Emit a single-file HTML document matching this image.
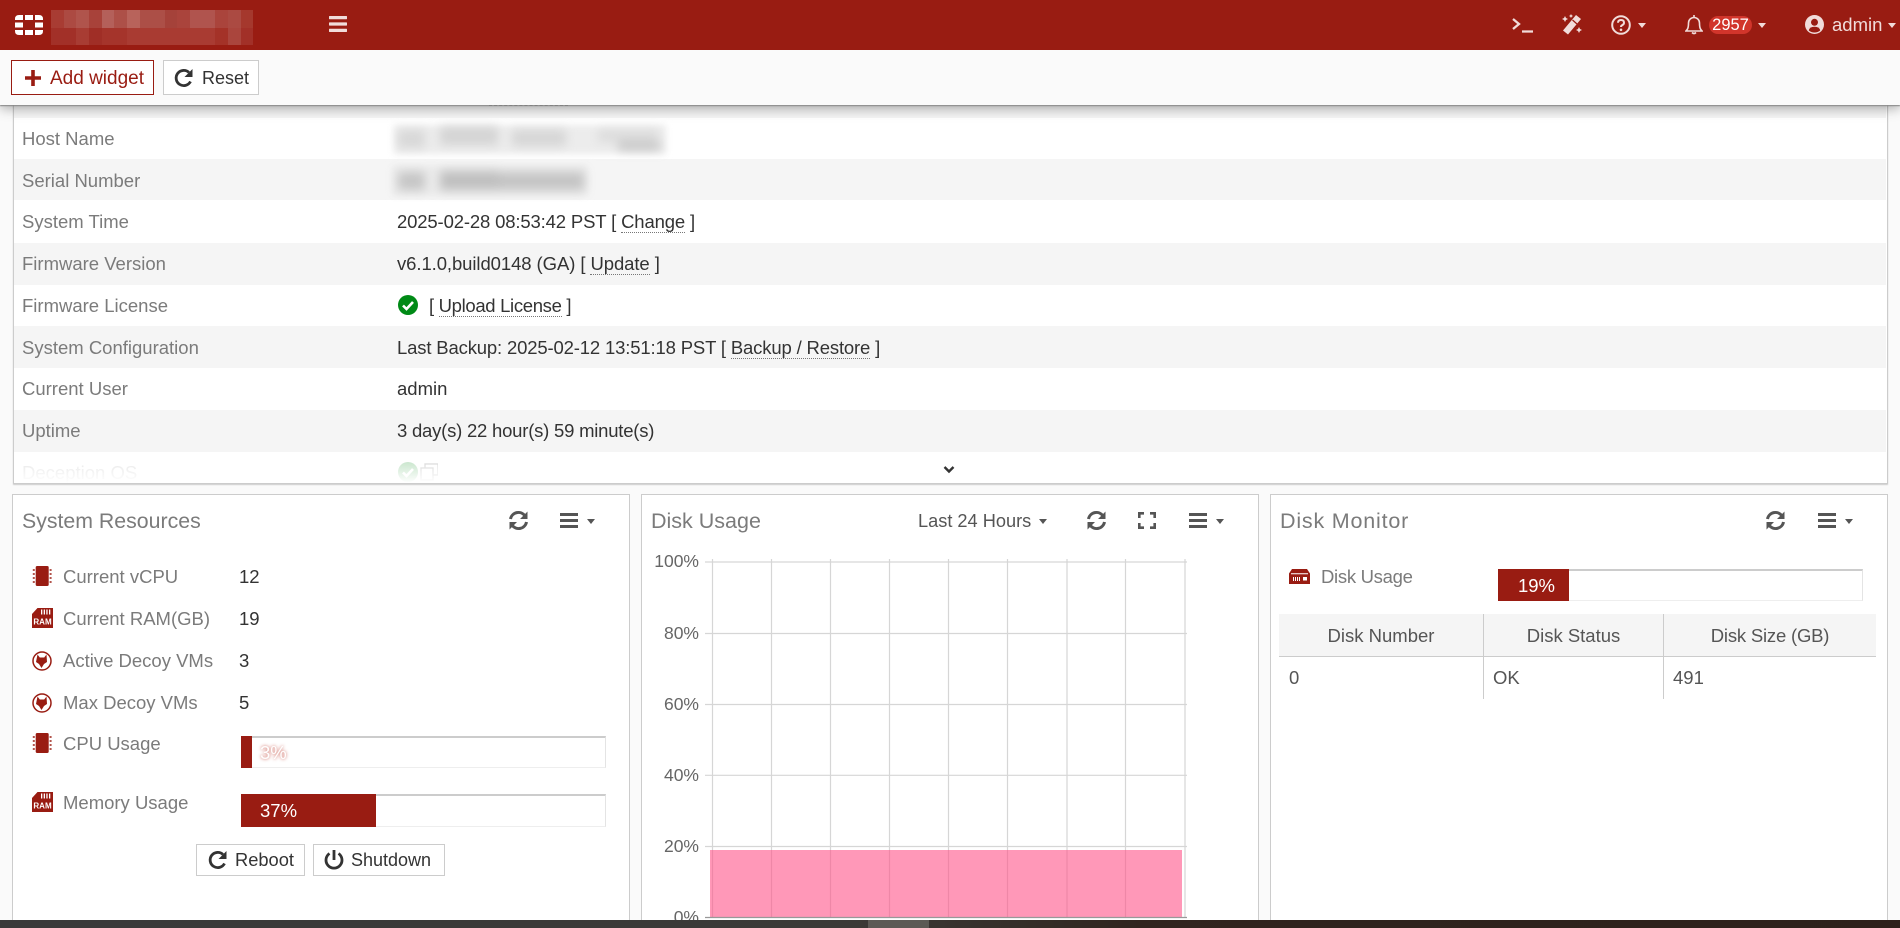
<!DOCTYPE html>
<html lang="en"><head><meta charset="utf-8"><title>Dashboard</title>
<style>
html,body{margin:0;padding:0;width:1900px;height:928px;overflow:hidden}
body{background:#fafafa;font-family:"Liberation Sans",sans-serif;color:#333}
#root{position:relative;width:1900px;height:928px;overflow:hidden;background:#fafafa}
.a,.t,svg{position:absolute}
.t{white-space:nowrap;line-height:24px;height:24px;font-size:18.5px}
.l{color:#7b7b7b}
.v{color:#333}
.h{font-size:21.3px;color:#7b7b7b}
.row{position:absolute;left:14px;width:1872px}
.g{background:#f5f5f5}
.d{border-bottom:1px dotted #777}
.box{position:absolute;background:#fff;border:1px solid #ccc;box-sizing:border-box}
.btn{position:absolute;box-sizing:border-box;background:#fff;border:1px solid #ccc}
.tr{position:absolute;width:0;height:0;border-left:4.5px solid transparent;border-right:4.5px solid transparent;border-top:5px solid #555}
.w{border-top-color:#f1dcda}
.prog{position:absolute;background:#fff;box-sizing:border-box;border-top:2px solid #ccc;border-right:1px solid #e4e4e4;border-bottom:1px solid #eee}
.fill{position:absolute;background:#991c12}
</style></head><body><div id="root">

<!-- panel -->
<div class="box" style="left:13px;top:95px;width:1875px;height:389px;box-shadow:0 1px 1px #ccc"></div>
<div class="row g" style="top:105px;height:13px"></div>
<div class="a" style="left:489px;top:105px;width:79px;border-top:1px dashed #888"></div>
<div class="row g" style="top:159px;height:41px"></div>
<div class="row g" style="top:243px;height:42px"></div>
<div class="row g" style="top:326px;height:42px"></div>
<div class="row g" style="top:410px;height:42px"></div>

<div class="t l" style="left:22px;top:127px">Host Name</div>
<div class="t l" style="left:22px;top:169px">Serial Number</div>
<div class="t l" style="left:22px;top:210px">System Time</div>
<div class="t l" style="left:22px;top:252px">Firmware Version</div>
<div class="t l" style="left:22px;top:294px">Firmware License</div>
<div class="t l" style="left:22px;top:336px">System Configuration</div>
<div class="t l" style="left:22px;top:377px">Current User</div>
<div class="t l" style="left:22px;top:419px">Uptime</div>
<div class="t" style="left:22px;top:461px;color:#d8d8d8">Deception OS</div>

<svg style="left:385px;top:115px" width="300" height="90" viewBox="385 115 300 90">
<defs><filter id="b1" filterUnits="userSpaceOnUse" x="385" y="118" width="300" height="84"><feGaussianBlur stdDeviation="5"/></filter><filter id="b2" filterUnits="userSpaceOnUse" x="385" y="118" width="300" height="84"><feGaussianBlur stdDeviation="3.5"/></filter></defs>
<g filter="url(#b2)">
<rect x="394" y="125" width="272" height="29" fill="#ececec"/>
<rect x="392" y="165" width="196" height="31" fill="#ebebeb"/>
</g>
<g filter="url(#b1)">
<rect x="398" y="130" width="27" height="18" fill="#d8d8d8"/><rect x="440" y="127" width="58" height="18" fill="#d4d4d4"/><rect x="512" y="130" width="54" height="16" fill="#d6d6d6"/><rect x="598" y="130" width="60" height="12" fill="#dcdcdc"/><rect x="618" y="142" width="42" height="8" fill="#c4c4c4"/>
<rect x="398" y="172" width="27" height="18" fill="#c6c6c6"/><rect x="440" y="171" width="58" height="19" fill="#c0c0c0"/><rect x="498" y="172" width="86" height="18" fill="#c4c4c4"/>
</g></svg>

<div class="t v" style="left:397px;top:210px;letter-spacing:-.15px">2025-02-28 08:53:42 PST [ <span class="d">Change</span> ]</div>
<div class="t v" style="left:397px;top:252px;letter-spacing:-.08px">v6.1.0,build0148 (GA) [ <span class="d">Update</span> ]</div>
<svg style="left:398px;top:295px" width="20" height="20" viewBox="0 0 20 20"><circle cx="10" cy="10" r="10" fill="#008a16"/><path d="M5 10.500l3.500 3.500L15 7" fill="none" stroke="#fff" stroke-width="2.600"/></svg>
<div class="t v" style="left:429px;top:294px;letter-spacing:-.33px">[ <span class="d">Upload License</span> ]</div>
<div class="t v" style="left:397px;top:336px;letter-spacing:-.16px">Last Backup: 2025-02-12 13:51:18 PST [ <span class="d">Backup / Restore</span> ]</div>
<div class="t v" style="left:397px;top:377px">admin</div>
<div class="t v" style="left:397px;top:419px;letter-spacing:-.22px">3 day(s) 22 hour(s) 59 minute(s)</div>
<svg style="left:398px;top:462px" width="40" height="20" viewBox="0 0 40 20"><circle cx="10" cy="10" r="10" fill="#9fd2a6"/><path d="M5 10.500l3.500 3.500L15 7" fill="none" stroke="#fff" stroke-width="2.600"/><g fill="none" stroke="#bbb" stroke-width="1.300"><rect x="27" y="2" width="13" height="11"/><rect x="23" y="6" width="12" height="12" fill="#fff"/></g></svg>
<div class="a" style="left:14px;top:452px;width:1872px;height:31px;background:linear-gradient(rgba(255,255,255,.2),#fff)"></div>
<svg style="left:943px;top:465px" width="12" height="10" viewBox="0 0 12 10"><path d="M1.500 2l4.500 4.500L10.500 2" fill="none" stroke="#333" stroke-width="2.400"/></svg>

<!-- toolbar -->
<div class="a" style="left:0;top:50px;width:1900px;height:55px;background:#fafafa;box-shadow:0 1px 1px #888,0 3px 12px rgba(0,0,0,.35)"></div>
<div class="btn" style="left:11px;top:60px;width:143px;height:35px;border-color:#991c12"></div>
<svg style="left:24px;top:69px" width="18" height="18" viewBox="0 0 18 18"><path d="M9 1v16M1 9h16" stroke="#991c12" stroke-width="3.600"/></svg>
<div class="t" style="left:50px;top:67px;color:#991c12;font-size:19px">Add widget</div>
<div class="btn" style="left:163px;top:60px;width:96px;height:35px"></div>
<svg style="left:174px;top:68px" width="20" height="20" viewBox="0 0 20 20"><path d="M16.500 13.500A7.600 7.600 0 1 1 15 4.500" fill="none" stroke="#333" stroke-width="2.800"/><path d="M18.500 1v8h-8z" fill="#333"/></svg>
<div class="t" style="left:202px;top:66px;font-size:18px">Reset</div>

<!-- topbar -->
<div class="a" style="left:0;top:0;width:1900px;height:50px;background:#991c12"></div>
<svg style="left:15px;top:15px" width="28" height="20" viewBox="0 0 28 20" fill="#fff"><path d="M0 5V4Q0 0 4 0H8V5ZM10 0H18V5H10ZM20 0H24Q28 0 28 4V5H20ZM0 7.500H8V12.500H0ZM20 7.500H28V12.500H20ZM0 15H8V20H4Q0 20 0 16ZM10 15H18V20H10ZM20 15H28V16Q28 20 24 20H20Z"/></svg>
<svg style="left:51px;top:10px" width="202" height="35" viewBox="0 0 202 35" shape-rendering="crispEdges">
<rect x="0" width="13" height="18" fill="#a83c33"/><rect x="13" width="12" height="18" fill="#ac4a42"/><rect x="25" width="13" height="18" fill="#b0544c"/><rect x="38" width="13" height="18" fill="#a8423a"/><rect x="51" width="12" height="18" fill="#b4605a"/><rect x="63" width="13" height="18" fill="#ad5048"/><rect x="76" width="13" height="18" fill="#b8635b"/><rect x="89" width="25" height="18" fill="#ac4f47"/><rect x="114" width="12" height="18" fill="#a5423a"/><rect x="126" width="13" height="18" fill="#aa443c"/><rect x="139" width="25" height="18" fill="#b0544e"/><rect x="164" width="13" height="18" fill="#aa443c"/><rect x="177" width="13" height="18" fill="#ab4a42"/><rect x="190" width="12" height="18" fill="#a5382d"/>
<rect x="0" y="18" width="25" height="17" fill="#a23028"/><rect x="25" y="18" width="13" height="17" fill="#a83c33"/><rect x="38" y="18" width="13" height="17" fill="#a02e26"/><rect x="51" y="18" width="25" height="17" fill="#a5342b"/><rect x="76" y="18" width="88" height="17" fill="#a93b32"/><rect x="164" y="18" width="13" height="17" fill="#a43228"/><rect x="177" y="18" width="13" height="17" fill="#aa453d"/><rect x="190" y="18" width="12" height="17" fill="#a23028"/>
</svg>
<svg style="left:329px;top:16px" width="18" height="16" viewBox="0 0 18 16" fill="#f1dcda"><rect width="18" height="3.200" rx=".6"/><rect y="6.400" width="18" height="3.200" rx=".6"/><rect y="12.800" width="18" height="3.200" rx=".6"/></svg>

<svg style="left:1512px;top:17px" width="21" height="16" viewBox="0 0 21 16" fill="none" stroke="#f1dcda" stroke-width="2.300"><path d="M1 2l6 5-6 5M10 14.500h11"/></svg>
<svg style="left:1561px;top:14px" width="22" height="21" viewBox="0 0 22 21"><path d="M15 1l5 4L7 20.500l-5-4z" fill="#f1dcda"/><path d="M11.500 6l4.500 4" stroke="#991c12" stroke-width="1.200"/><path d="M4 2l1 2 2 1-2 1-1 2-1-2-2-1 2-1zM18 13l1 2 2 1-2 1-1 2-1-2-2-1 2-1zM10 0l.7 1.300L12 2l-1.300.7L10 4l-.7-1.300L8 2l1.300-.7z" fill="#f1dcda"/></svg>
<svg style="left:1611px;top:15px" width="20" height="20" viewBox="0 0 20 20"><circle cx="10" cy="10" r="8.800" fill="none" stroke="#f1dcda" stroke-width="2"/><path d="M7 7.800Q7 5 10 5t3 2.700Q13 9.300 11 10.300Q10 10.800 10 12" fill="none" stroke="#f1dcda" stroke-width="2"/><circle cx="10" cy="14.800" r="1.300" fill="#f1dcda"/></svg>
<div class="tr w" style="left:1638px;top:23px"></div>
<svg style="left:1685px;top:14px" width="18" height="21" viewBox="0 0 18 21" fill="none" stroke="#f1dcda" stroke-width="1.600"><path d="M9 1v2M3.500 9a5.500 5.500 0 0 1 11 0c0 5 1 6.500 2.500 8H1c1.500-1.500 2.500-3 2.500-8zM7 18.500q2 2 4 0"/></svg>
<div class="a" style="left:1709px;top:16px;width:43px;height:18px;border-radius:9px;background:#d1352b"></div>
<div class="t" style="left:1709px;top:13px;width:43px;text-align:center;color:#fff;font-size:16.5px">2957</div>
<div class="tr w" style="left:1758px;top:23px"></div>
<svg style="left:1805px;top:15px" width="19" height="19" viewBox="0 0 19 19"><circle cx="9.500" cy="9.500" r="9.500" fill="#f1dcda"/><circle cx="9.500" cy="7.300" r="3.500" fill="#991c12"/><path d="M3.800 15.500Q4.500 11.800 9.500 11.800T15.200 15.500Q12.800 17.500 9.500 17.500T3.800 15.500z" fill="#991c12"/></svg>
<div class="t" style="left:1832px;top:13px;color:#f1dcda;font-size:18.500px">admin</div>
<div class="tr w" style="left:1888px;top:23px"></div>

<!-- System Resources -->
<div class="box" style="left:12px;top:494px;width:618px;height:440px"></div>
<div class="t h" style="left:22px;top:509px">System Resources</div>
<svg style="left:508px;top:510px" width="21" height="21" viewBox="0 0 21 21" fill="none" stroke="#555" stroke-width="3"><path d="M2.500 9A8 8 0 0 1 17 6M18.500 12A8 8 0 0 1 4 15"/><path d="M19.500 1.500V9h-7.500zM1.500 19.500V12H9z" fill="#555" stroke="none"/></svg>
<svg style="left:560px;top:513px" width="18" height="15" viewBox="0 0 18 15" fill="#555"><rect width="18" height="3"/><rect y="6" width="18" height="3"/><rect y="12" width="18" height="3"/></svg>
<div class="tr" style="left:587px;top:519px"></div>

<svg style="left:32px;top:566px" width="21" height="20" viewBox="0 0 21 20" fill="#991c12"><rect x="3.700" y="0" width="13" height="20" rx="1.500"/><path d="M.8 3h2v2h-2zM.8 7h2v2h-2zM.8 11h2v2h-2zM.8 15h2v2h-2zM17.600 3h2v2h-2zM17.600 7h2v2h-2zM17.600 11h2v2h-2zM17.600 15h2v2h-2z" opacity=".75"/></svg>
<div class="t l" style="left:63px;top:565px">Current vCPU</div><div class="t v" style="left:239px;top:565px">12</div>
<svg style="left:32px;top:608px" width="21" height="20" viewBox="0 0 21 20"><path d="M5.500 0H21V20H0V6z" fill="#991c12"/><path d="M9 1.500h1.300v5H9zM11.700 1.500H13v5h-1.300zM14.300 1.500h1.300v5h-1.300zM17 1.500h1.300v5H17z" fill="#fff"/><text x="10.500" y="16.500" text-anchor="middle" font-family="Liberation Sans" font-size="8" font-weight="bold" fill="#fff">RAM</text></svg>
<div class="t l" style="left:63px;top:607px">Current RAM(GB)</div><div class="t v" style="left:239px;top:607px">19</div>
<svg style="left:32px;top:651px" width="20" height="20" viewBox="0 0 20 20"><circle cx="10" cy="10" r="9" fill="#fff" stroke="#991c12" stroke-width="1.500"/><path d="M5.500 3.500l2.300 3h4.400l2.300-3 .5 7.500-3 2-2.500 4-2.500-4-3-2z" fill="#991c12"/></svg>
<div class="t l" style="left:63px;top:649px">Active Decoy VMs</div><div class="t v" style="left:239px;top:649px">3</div>
<svg style="left:32px;top:693px" width="20" height="20" viewBox="0 0 20 20"><circle cx="10" cy="10" r="9" fill="#fff" stroke="#991c12" stroke-width="1.500"/><path d="M5.500 3.500l2.300 3h4.400l2.300-3 .5 7.500-3 2-2.500 4-2.500-4-3-2z" fill="#991c12"/></svg>
<div class="t l" style="left:63px;top:691px">Max Decoy VMs</div><div class="t v" style="left:239px;top:691px">5</div>
<svg style="left:32px;top:733px" width="21" height="20" viewBox="0 0 21 20" fill="#991c12"><rect x="3.700" y="0" width="13" height="20" rx="1.500"/><path d="M.8 3h2v2h-2zM.8 7h2v2h-2zM.8 11h2v2h-2zM.8 15h2v2h-2zM17.600 3h2v2h-2zM17.600 7h2v2h-2zM17.600 11h2v2h-2zM17.600 15h2v2h-2z" opacity=".75"/></svg>
<div class="t l" style="left:63px;top:732px">CPU Usage</div>
<div class="prog" style="left:241px;top:736px;width:365px;height:32px"></div><div class="fill" style="left:241px;top:736px;width:11px;height:32px"></div>
<div class="t" style="left:260px;top:741px;color:#fff;text-shadow:0 0 3px rgba(192,57,43,.85)">3%</div>
<svg style="left:32px;top:792px" width="21" height="20" viewBox="0 0 21 20"><path d="M5.500 0H21V20H0V6z" fill="#991c12"/><path d="M9 1.500h1.300v5H9zM11.700 1.500H13v5h-1.300zM14.300 1.500h1.300v5h-1.300zM17 1.500h1.300v5H17z" fill="#fff"/><text x="10.500" y="16.500" text-anchor="middle" font-family="Liberation Sans" font-size="8" font-weight="bold" fill="#fff">RAM</text></svg>
<div class="t l" style="left:63px;top:791px">Memory Usage</div>
<div class="prog" style="left:241px;top:794px;width:365px;height:33px"></div><div class="fill" style="left:241px;top:794px;width:135px;height:33px"></div>
<div class="t" style="left:260px;top:799px;color:#fff">37%</div>
<div class="btn" style="left:196px;top:844px;width:109px;height:32px"></div>
<svg style="left:208px;top:850px" width="20" height="20" viewBox="0 0 20 20"><path d="M16.500 13.500A7.600 7.600 0 1 1 15 4.500" fill="none" stroke="#333" stroke-width="2.800"/><path d="M18.500 1v8h-8z" fill="#333"/></svg>
<div class="t" style="left:235px;top:848px;font-size:18.3px">Reboot</div>
<div class="btn" style="left:313px;top:844px;width:132px;height:32px"></div>
<svg style="left:324px;top:849px" width="20" height="22" viewBox="0 0 20 22" fill="none" stroke="#333" stroke-width="2.800"><path d="M10 1v10M5.500 4.500a8 8 0 1 0 9 0"/></svg>
<div class="t" style="left:351px;top:848px;font-size:18px">Shutdown</div>

<!-- Disk Usage -->
<div class="box" style="left:641px;top:494px;width:618px;height:440px"></div>
<div class="t h" style="left:651px;top:509px;font-size:21.5px">Disk Usage</div>
<div class="t" style="left:918px;top:509px;color:#555;font-size:18.2px">Last 24 Hours</div>
<div class="tr" style="left:1039px;top:519px"></div>
<svg style="left:1086px;top:510px" width="21" height="21" viewBox="0 0 21 21" fill="none" stroke="#555" stroke-width="3"><path d="M2.500 9A8 8 0 0 1 17 6M18.500 12A8 8 0 0 1 4 15"/><path d="M19.500 1.500V9h-7.500zM1.500 19.500V12H9z" fill="#555" stroke="none"/></svg>
<svg style="left:1138px;top:512px" width="18" height="17" viewBox="0 0 18 17" fill="none" stroke="#555" stroke-width="2.600"><path d="M1.300 6V1.300H6M12 1.300h4.700V6M1.300 11v4.700H6M12 15.700h4.700V11"/></svg>
<svg style="left:1189px;top:513px" width="18" height="15" viewBox="0 0 18 15" fill="#555"><rect width="18" height="3"/><rect y="6" width="18" height="3"/><rect y="12" width="18" height="3"/></svg>
<div class="tr" style="left:1216px;top:519px"></div>

<svg style="left:700px;top:555px" width="495" height="365" viewBox="700 555 495 365">
<g stroke="#d6d6d6" stroke-width="1.200">
<path d="M705 562H1187M705 633.500H1187M705 704.500H1187M705 775.300H1187M705 846.500H1187"/>
<path d="M712.500 559V917M771.500 559V917M830.500 559V917M889.500 559V917M948.500 559V917M1007.500 559V917M1067 559V917M1125.500 559V917M1185 559V917"/>
</g>
<rect x="710" y="850" width="472" height="67" fill="#ff4d85" fill-opacity=".58"/>
<path d="M705 917.500H1187" stroke="#999" stroke-width="1.300"/>
</svg>
<div class="t" style="left:640px;top:549px;width:59px;text-align:right;font-size:17.500px;color:#666">100%</div>
<div class="t" style="left:640px;top:621px;width:59px;text-align:right;font-size:17.500px;color:#666">80%</div>
<div class="t" style="left:640px;top:692px;width:59px;text-align:right;font-size:17.500px;color:#666">60%</div>
<div class="t" style="left:640px;top:763px;width:59px;text-align:right;font-size:17.500px;color:#666">40%</div>
<div class="t" style="left:640px;top:834px;width:59px;text-align:right;font-size:17.500px;color:#666">20%</div>
<div class="t" style="left:640px;top:905px;width:59px;text-align:right;font-size:17.500px;color:#666">0%</div>

<!-- Disk Monitor -->
<div class="box" style="left:1270px;top:494px;width:618px;height:440px"></div>
<div class="t h" style="left:1280px;top:509px;font-size:21.5px;letter-spacing:.8px">Disk Monitor</div>
<svg style="left:1765px;top:510px" width="21" height="21" viewBox="0 0 21 21" fill="none" stroke="#555" stroke-width="3"><path d="M2.500 9A8 8 0 0 1 17 6M18.500 12A8 8 0 0 1 4 15"/><path d="M19.500 1.500V9h-7.500zM1.500 19.500V12H9z" fill="#555" stroke="none"/></svg>
<svg style="left:1818px;top:513px" width="18" height="15" viewBox="0 0 18 15" fill="#555"><rect width="18" height="3"/><rect y="6" width="18" height="3"/><rect y="12" width="18" height="3"/></svg>
<div class="tr" style="left:1845px;top:519px"></div>
<svg style="left:1289px;top:569px" width="21" height="15" viewBox="0 0 21 15"><path d="M3 0H18L21 4.500V15H0V4.500z" fill="#991c12"/><path d="M2 4.800H19" stroke="#fff" stroke-width="1"/><path d="M4 8h1v4H4zM6 8h1v4H6zM8 8h1v4H8zM10 8h1v4h-1z" fill="#fff"/><rect x="14" y="8" width="4" height="3.500" fill="#fff"/></svg>
<div class="t l" style="left:1321px;top:565px;letter-spacing:-.3px">Disk Usage</div>
<div class="prog" style="left:1498px;top:569px;width:365px;height:32px"></div><div class="fill" style="left:1498px;top:569px;width:71px;height:32px"></div>
<div class="t" style="left:1498px;top:574px;width:77px;text-align:center;color:#fff">19%</div>

<div class="a g" style="left:1279px;top:614px;width:597px;height:42px;border-bottom:1px solid #ccc"></div>
<div class="a" style="left:1483px;top:614px;width:1px;height:85px;background:#ccc"></div>
<div class="a" style="left:1663px;top:614px;width:1px;height:85px;background:#ccc"></div>
<div class="t" style="left:1279px;top:624px;width:204px;text-align:center;color:#555">Disk Number</div>
<div class="t" style="left:1484px;top:624px;width:179px;text-align:center;color:#555">Disk Status</div>
<div class="t" style="left:1664px;top:624px;width:212px;text-align:center;color:#555;letter-spacing:-.2px">Disk Size (GB)</div>
<div class="t" style="left:1289px;top:666px;color:#555">0</div>
<div class="t" style="left:1493px;top:666px;color:#555">OK</div>
<div class="t" style="left:1673px;top:666px;color:#555">491</div>

<!-- bottom bar -->
<div class="a" style="left:0;top:920px;width:1900px;height:8px;background:linear-gradient(90deg,#3a3a3a 0,#3b3a37 45%,#30251f 60%,#2d211b 100%)"></div>
<div class="a" style="left:868px;top:920px;width:61px;height:8px;background:#5c5a55"></div>
</div></body></html>
